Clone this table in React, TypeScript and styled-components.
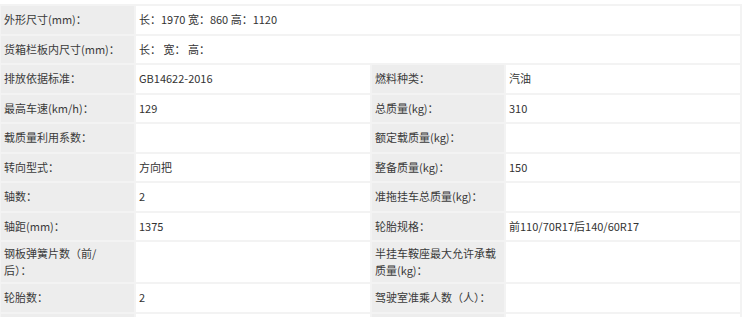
import React from 'react';
import styled, { createGlobalStyle } from 'styled-components';

const GlobalStyle = createGlobalStyle`
  html, body {
    margin: 0;
    padding: 0;
    background: #ffffff;
  }
  body {
    font-family: "Noto Sans CJK SC", "Noto Sans", sans-serif;
  }
`;

const Page = styled.div`
  width: 750px;
  height: 317px;
  overflow: hidden;
  padding-top: 4px;
  box-sizing: border-box;
`;

const ParamTable = styled.table`
  width: 741px;
  margin-left: -1px;
  border-collapse: collapse;
  table-layout: fixed;
  font-size: 11px;
  color: #333333;
`;

const Cell = styled.td<{ $label?: boolean }>`
  border: 2px solid #f3f3f3;
  background: ${(p) => (p.$label ? '#ededed' : '#ffffff')};
  color: ${(p) => (p.$label ? '#3a3a3a' : '#333333')};
  height: 29.5px;
  padding: 3px 5px 3px 3px;
  line-height: 17px;
  vertical-align: middle;
  text-align: left;
  box-sizing: border-box;
  white-space: pre-line;
  word-break: break-all;
`;

type Pair = [string, string];

const wideRows: Pair[] = [
  ['外形尺寸(mm)：', '长：1970 宽：860 高：1120'],
  ['货箱栏板内尺寸(mm)：', '长：  宽：  高：'],
];

const rows: [Pair, Pair][] = [
  [['排放依据标准：', 'GB14622-2016'], ['燃料种类：', '汽油']],
  [['最高车速(km/h)：', '129'], ['总质量(kg)：', '310']],
  [['载质量利用系数：', ''], ['额定载质量(kg)：', '']],
  [['转向型式：', '方向把'], ['整备质量(kg)：', '150']],
  [['轴数：', '2'], ['准拖挂车总质量(kg)：', '']],
  [['轴距(mm)：', '1375'], ['轮胎规格：', '前110/70R17后140/60R17']],
  [['钢板弹簧片数（前/\n后）：', ''], ['半挂车鞍座最大允许承载质量(kg)：', '']],
  [['轮胎数：', '2'], ['驾驶室准乘人数（人）：', '']],
  [['', ''], ['', '']],
];

export default function App() {
  return (
    <Page>
      <GlobalStyle />
      <ParamTable>
        <colgroup>
          <col style={{ width: 135 }} />
          <col style={{ width: 236 }} />
          <col style={{ width: 134 }} />
          <col style={{ width: 236 }} />
        </colgroup>
        <tbody>
          {wideRows.map(([k, v]) => (
            <tr key={k}>
              <Cell $label>{k}</Cell>
              <Cell colSpan={3}>{v}</Cell>
            </tr>
          ))}
          {rows.map(([a, b], i) => (
            <tr key={i}>
              <Cell $label>{a[0]}</Cell>
              <Cell>{a[1]}</Cell>
              <Cell $label>{b[0]}</Cell>
              <Cell>{b[1]}</Cell>
            </tr>
          ))}
        </tbody>
      </ParamTable>
    </Page>
  );
}
